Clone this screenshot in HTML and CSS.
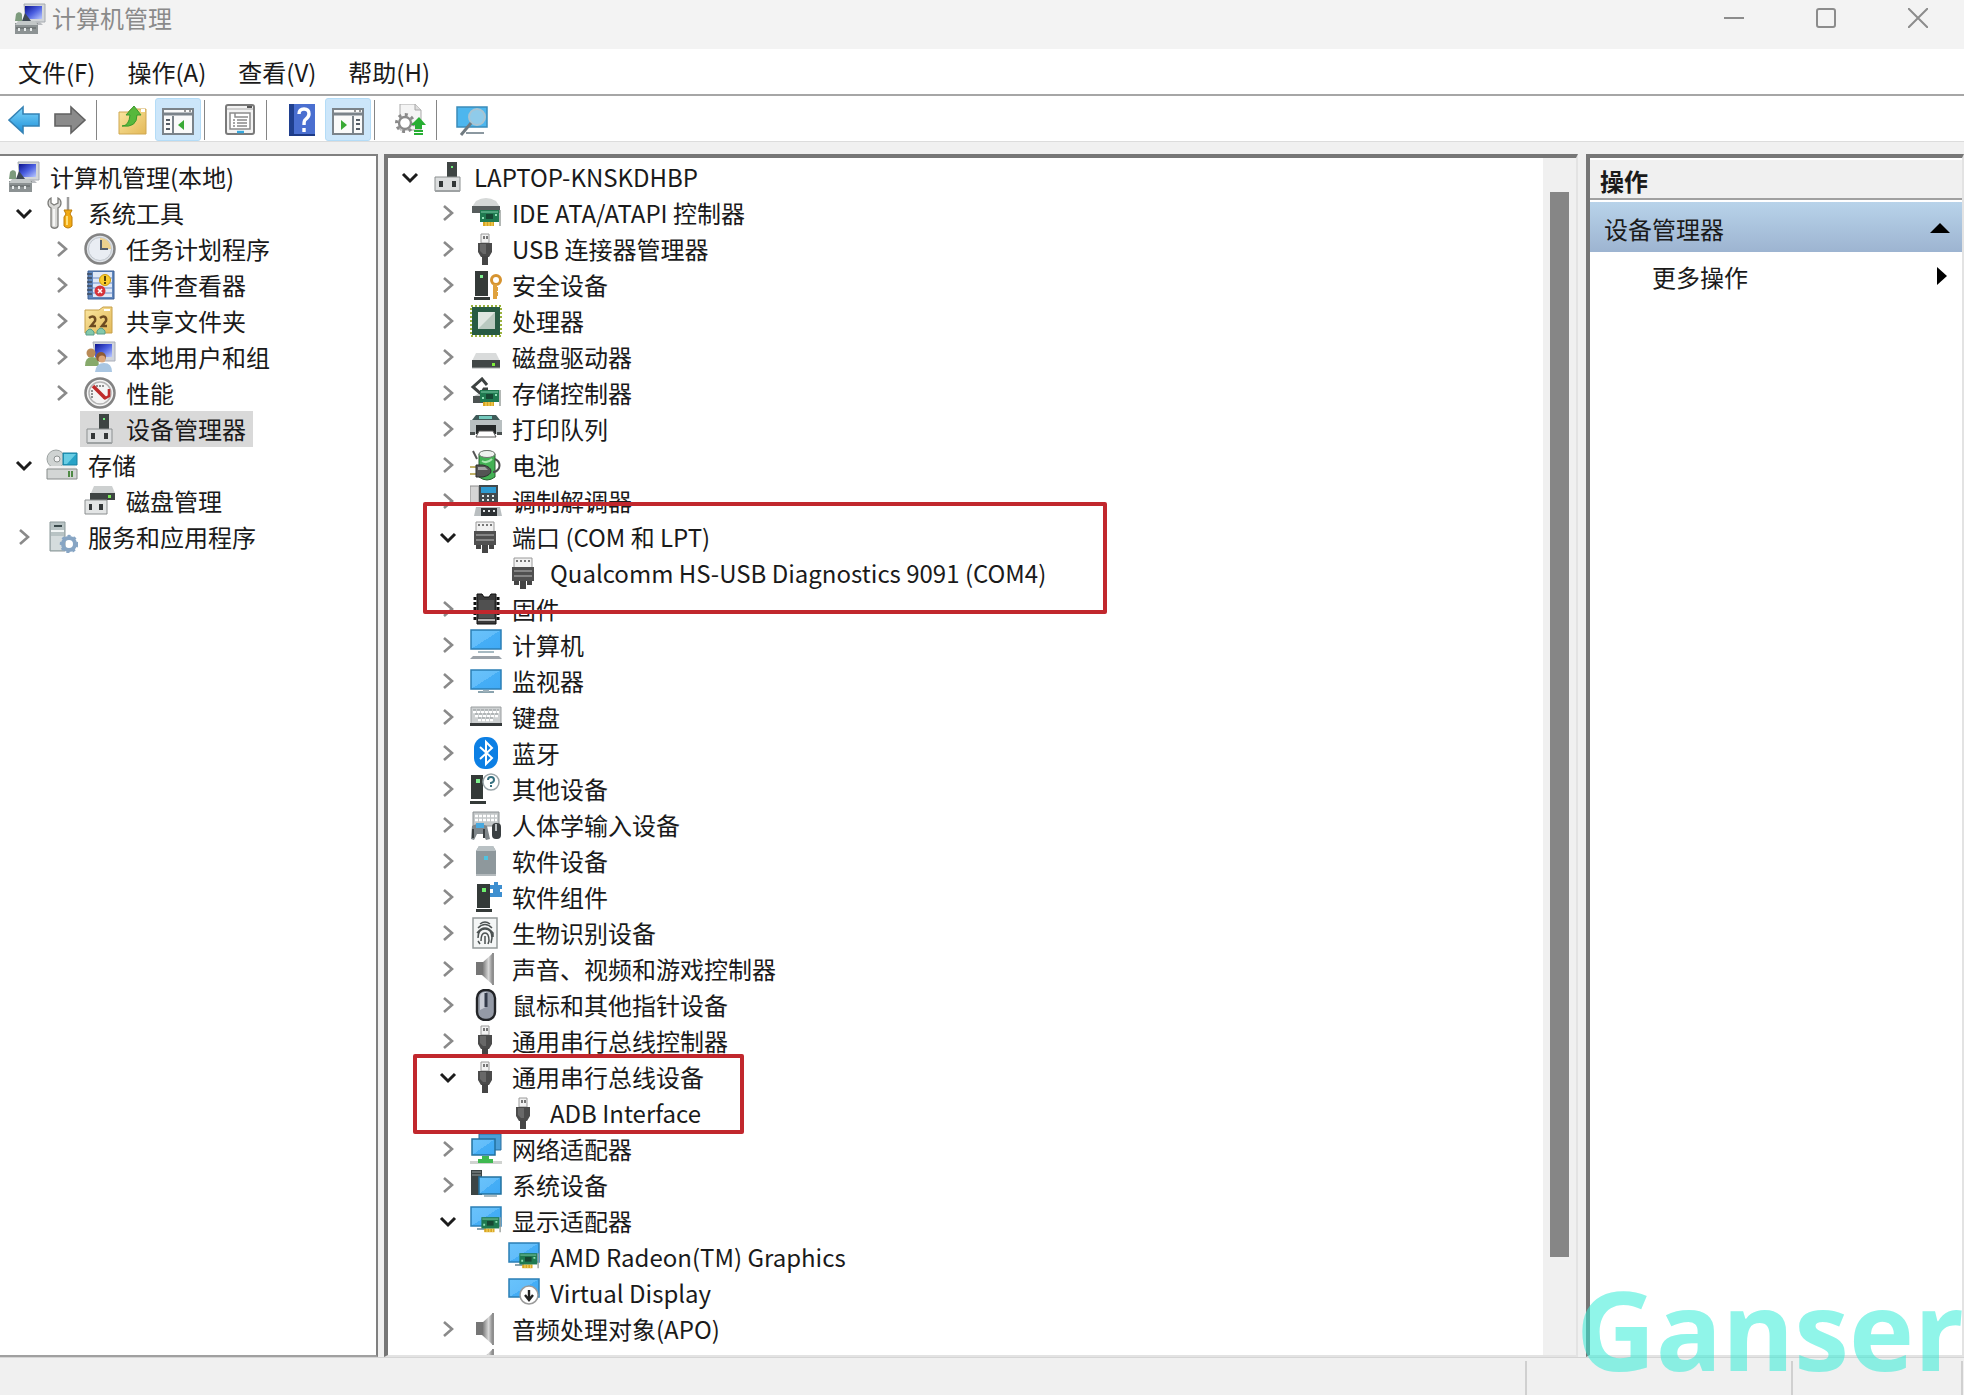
FILE: index.html
```html
<!DOCTYPE html>
<html lang="zh-CN">
<head>
    <meta charset="UTF-8">
    <meta name="viewport" content="width=device-width, initial-scale=1.0">
    <title>计算机管理</title>
    <link rel="stylesheet" href="styles.css">
</head>
<body>
    <!-- Icon sprite -->
    <svg class="sprite" aria-hidden="true">
        <defs>
            <linearGradient id="screen" x1="0" y1="0" x2="1" y2="1">
                <stop offset="0" stop-color="#69c3fb"/>
                <stop offset="0.5" stop-color="#62bdfa"/>
                <stop offset="0.5" stop-color="#45aef6"/>
                <stop offset="1" stop-color="#3fa9f5"/>
            </linearGradient>
            <linearGradient id="metal" x1="0" y1="0" x2="1" y2="0">
                <stop offset="0" stop-color="#6d6d6d"/>
                <stop offset="0.6" stop-color="#d8d8d8"/>
                <stop offset="1" stop-color="#7d7d7d"/>
            </linearGradient>
            <linearGradient id="navy" x1="0" y1="0" x2="1" y2="1">
                <stop offset="0" stop-color="#0b128e"/>
                <stop offset="0.5" stop-color="#4a5ee0"/>
                <stop offset="1" stop-color="#b9c8ff"/>
            </linearGradient>
            <linearGradient id="folder" x1="0" y1="0" x2="1" y2="1">
                <stop offset="0" stop-color="#fbe7a2"/>
                <stop offset="1" stop-color="#e3b958"/>
            </linearGradient>
            <linearGradient id="blue" x1="0" y1="0" x2="0" y2="1">
                <stop offset="0" stop-color="#7fd6fb"/>
                <stop offset="1" stop-color="#1c8fd8"/>
            </linearGradient>
        </defs>
        <symbol id="chevron-right" viewBox="0 0 32 32"><path d="M12 9l8 7-8 7" fill="none" stroke="#8a8a8a" stroke-width="2.6"/></symbol>
        <symbol id="chevron-down" viewBox="0 0 32 32"><path d="M9 13l7 7 7-7" fill="none" stroke="#1c1c1c" stroke-width="3"/></symbol>
        <symbol id="card" viewBox="0 0 32 32">
            <path d="M30 13v16" stroke="#9aa19d" stroke-width="1.5"/>
            <path d="M13 25h11v4H13z" fill="#d9a520"/><path d="M16 25v4M19 25v4M22 25v4" stroke="#f4da72"/>
            <path d="M10 13h19v12H10z" fill="#1f7a50"/><path d="M11 14h17v2H11z" fill="#4fa37c"/>
            <path d="M16 17h7v5h-7z" fill="#174733"/><path d="M12 20h2v2h-2zM25 17h2v2h-2z" fill="#8fe0b4"/>
        </symbol>
        <symbol id="computer" viewBox="0 0 32 32">
            <path d="M10 1h21v18H12z" fill="#d3d6d8" stroke="#a5aab0"/>
            <path d="M11 3h17v13H11z" fill="url(#navy)"/>
            <path d="M2 11c2-3 6-2 6 1v6H1z" fill="#7d9b7d"/>
            <path d="M11 10l6 8H8z" fill="#3f4954"/>
            <path d="M18 19h8l3 3H17z" fill="#b9bcc0"/>
            <path d="M1 20h23v11H1z" fill="#8c9293"/><path d="M1 22h23l-3-4H4z" fill="#c3c8c8"/>
            <path d="M2 25h20" stroke="#5a6060"/><path d="M5 25v3M11 25v3M17 25v3" stroke="#e8ecec" stroke-width="2"/>
        </symbol>
        <symbol id="tools" viewBox="0 0 32 32">
            <path d="M5 1v5l3 2 4-2V1c4 2 4 8 0 10v18c-1 3-6 3-7 0V11C1 9 1 3 5 1z" fill="#d9d9d7" stroke="#7e7e7b" stroke-width="1.3"/>
            <path d="M8 12v17" stroke="#fff" stroke-width="1.5"/>
            <path d="M22 0v14" stroke="#9c9c9c" stroke-width="2.5"/>
            <path d="M18 13h8l-2 4 2 3v9q-4 4-8 0v-9l2-3z" fill="#f1aa14" stroke="#bd7c08"/>
            <path d="M21 19v9" stroke="#ffe07a" stroke-width="2"/>
        </symbol>
        <symbol id="clock" viewBox="0 0 32 32">
            <circle cx="16" cy="16" r="14.5" fill="#dfe3e8" stroke="#838383" stroke-width="2.5"/>
            <circle cx="16" cy="16" r="11.5" fill="#e9edf3" stroke="#bfc5cc"/>
            <path d="M16 16V5a11 11 0 0 1 11 11z" fill="#ecd08e"/>
            <path d="M17 7v9h7" fill="none" stroke="#555e6c" stroke-width="2"/>
        </symbol>
        <symbol id="events" viewBox="0 0 32 32">
            <path d="M4 2h26v28H4z" fill="#5f86bd" stroke="#3d5f94"/>
            <path d="M9 3h19v25H9z" fill="#dfe8f6"/>
            <path d="M9 9h19M9 14h19M9 19h19M9 24h19" stroke="#6e8ecb"/>
            <path d="M3 5h5M3 9h5M3 13h5M3 17h5M3 21h5M3 25h5" stroke="#3f4b5c" stroke-width="1.6"/>
            <circle cx="21" cy="11" r="5.5" fill="#f9cc2e" stroke="#d29d0a"/><path d="M21 7v5M21 13v2" stroke="#52420a" stroke-width="2"/>
            <circle cx="16" cy="22" r="5.5" fill="#d6333a"/><path d="M14 20l4 4M18 20l-4 4" stroke="#fff" stroke-width="1.6"/>
        </symbol>
        <symbol id="share" viewBox="0 0 32 32">
            <path d="M1 5h14l4-3h9v26H1z" fill="url(#folder)" stroke="#c6a04b"/>
            <path d="M20 4h6v2h-6z" fill="#fff"/>
            <path d="M5 13c4-3 7-1 6 3l-4 5h5M16 13c4-3 7-1 6 3l-4 5h5" fill="none" stroke="#6e4b21" stroke-width="2.5"/>
            <path d="M2 27q4-6 8 0v3H2zM13 26q4-6 8 0v3h-8z" fill="#83c9ac" stroke="#5a9d8a"/>
        </symbol>
        <symbol id="users" viewBox="0 0 32 32">
            <path d="M9 1h22v19H12z" fill="#d0d4dc" stroke="#a9adb8"/><path d="M11 3h17v13H11z" fill="url(#navy)"/>
            <circle cx="7" cy="12" r="4.5" fill="#b98a56"/><path d="M1 25q0-9 7-9t7 9z" fill="#86a96b"/>
            <circle cx="17" cy="16" r="5" fill="#8e5a33"/><circle cx="18" cy="18" r="3.5" fill="#dba67a"/>
            <path d="M11 31q1-9 9-9t8 9z" fill="#a9c6e2"/>
        </symbol>
        <symbol id="perf" viewBox="0 0 32 32">
            <circle cx="16" cy="16" r="14.5" fill="#f4f4f4" stroke="#838383" stroke-width="2.5"/>
            <circle cx="16" cy="16" r="11" fill="none" stroke="#b4b4b4" stroke-width="1.5"/>
            <path d="M8 21v-8M12 9h8" stroke="#8f8f8f" stroke-width="2" stroke-dasharray="2 1"/>
            <path d="M9 9l12 12" stroke="#bf2b2b" stroke-width="3.5"/><path d="M25 12v7l-5 3" fill="none" stroke="#bf2b2b" stroke-width="2.6"/>
        </symbol>
        <symbol id="device" viewBox="0 0 32 32">
            <path d="M15 1h10v15H15z" fill="#3e4443"/><path d="M19 5h2v2h-2z" fill="#6ef07a"/>
            <path d="M3 16h25v14H3z" fill="#dcdedf" stroke="#8b8f90"/><path d="M3 29h25v2H3z" fill="#9ea2a3"/>
            <path d="M7 20h4v6H7zM20 20h4v6h-4z" fill="#333738"/>
        </symbol>
        <symbol id="storage" viewBox="0 0 32 32">
            <circle cx="10" cy="10" r="9" fill="#cfd3d2" stroke="#9da3a2"/><circle cx="11" cy="10" r="3" fill="#f5f5f5" stroke="#8c9190"/>
            <path d="M17 4h14v12H17z" fill="#27a3c7" stroke="#177f9e"/><path d="M18 5h12l-9 10h-3z" fill="#69cde4"/>
            <path d="M3 17h26l2 4H1z" fill="#f0f0f0"/><path d="M1 20h30v10H1z" fill="#d3d6d5" stroke="#868b8a"/>
            <path d="M23 22v6M26 22v6" stroke="#4f8a45" stroke-width="2"/>
        </symbol>
        <symbol id="disk-mgmt" viewBox="0 0 32 32">
            <path d="M10 1h18l3 7H7z" fill="#cdd0d0"/><path d="M6 8h25v7H6z" fill="#3e4443"/><path d="M24 10h3v3h-3z" fill="#78ea55"/>
            <path d="M1 15h22v14H1z" fill="#e3e5e5" stroke="#8b8f90"/><path d="M5 19h3v6H5zM15 19h4v6h-4z" fill="#333738"/>
        </symbol>
        <symbol id="services" viewBox="0 0 32 32">
            <path d="M4 1h15v29H4z" fill="#b8c3c4" stroke="#8b9899"/><path d="M8 5h8" stroke="#39484a" stroke-width="2"/><path d="M5 10h13" stroke="#f1f5f5" stroke-width="2"/>
            <path d="M5 15h13v14H5z" fill="#d5dcdd"/>
            <circle cx="23" cy="23" r="6" fill="none" stroke="#87a5c4" stroke-width="4"/>
            <circle cx="23" cy="23" r="8" fill="none" stroke="#87a5c4" stroke-width="2.5" stroke-dasharray="3 3"/>
        </symbol>
        <symbol id="ide" viewBox="0 0 32 32">
            <path d="M6 4q10-6 20 0l4 6H2z" fill="#d5d8d7"/><path d="M2 9h28v7H2z" fill="#575d5d"/><use href="#card" width="32" height="32"/>
        </symbol>
        <symbol id="usb" viewBox="0 0 32 32">
            <path d="M11 1h8v9h-8z" fill="#f2f2f2" stroke="#9a9a9a"/><path d="M13 3h2v3h-2zM16 3h2v3h-2z" fill="#777"/>
            <path d="M8 10h14v9l-3 5h-8l-3-5z" fill="#4b4b4b"/><path d="M10 11h6v10h-3l-3-3z" fill="#686868"/><path d="M12 23h6v9h-6z" fill="#454545"/>
        </symbol>
        <symbol id="tower" viewBox="0 0 32 32">
            <path d="M5 2h13v25H5z" fill="#343a38"/><path d="M10 6h3v3h-3z" fill="#7ef08e"/><path d="M4 28h16v3H4z" fill="#343a38"/>
        </symbol>
        <symbol id="security" viewBox="0 0 32 32">
            <use href="#tower" width="32" height="32"/>
            <circle cx="26" cy="11" r="4.5" fill="none" stroke="#d6932f" stroke-width="3"/><path d="M25 15v15M26 20h2M26 25h2" stroke="#e0a23e" stroke-width="4"/>
        </symbol>
        <symbol id="cpu" viewBox="0 0 32 32">
            <path d="M1 1h30v30H1z" fill="none" stroke="#9ab23e" stroke-width="2" stroke-dasharray="2 2"/>
            <path d="M2 2h28v28H2z" fill="#275a43"/><path d="M8 7h17v17H8z" fill="#dfe6e1"/><path d="M25 7v17H8z" fill="#b9c9c0"/>
        </symbol>
        <symbol id="disk" viewBox="0 0 32 32">
            <path d="M6 12h20l4 8H2z" fill="#d9dbdb"/><path d="M2 19h28v8H2z" fill="#414746"/><path d="M22 22h3v3h-3z" fill="#7fee3b"/><path d="M2 27h28" stroke="#a7abaa"/>
        </symbol>
        <symbol id="storage-ctl" viewBox="0 0 32 32">
            <path d="M17 8l-5-6-9 8 8 7 3-5h4" fill="none" stroke="#3d4241" stroke-width="3"/>
            <path d="M3 19h12v7H3z" fill="#4c5251"/><path d="M4 19l4-2 6 2z" fill="#c5c9c8"/><use href="#card" width="32" height="32"/>
        </symbol>
        <symbol id="printer" viewBox="0 0 32 32">
            <path d="M6 2h20l4 5H2z" fill="#3f5a58"/><path d="M9 3h13v3H9z" fill="#74c9bd"/><path d="M0 7h32v14H0z" fill="#b8bfc0"/>
            <path d="M6 12h20v9H6z" fill="#242828"/><path d="M9 18h14l3 6H6z" fill="#fff" stroke="#555"/><path d="M0 19h5v3H0zM27 19h5v3h-5z" fill="#4b5151"/>
        </symbol>
        <symbol id="battery" viewBox="0 0 32 32">
            <path d="M3 2l4 8" stroke="#555" stroke-width="2"/>
            <path d="M9 5q8-7 16 0v23q-8 6-16 0z" fill="#43b154" stroke="#28602f"/><ellipse cx="17" cy="5" rx="8" ry="3.5" fill="#eef2ee" stroke="#707570"/>
            <path d="M12 12q5 3 10-2" fill="none" stroke="#a7e6ae" stroke-width="2"/>
            <path d="M25 10q6 3 4 9-2 4-6 4" fill="none" stroke="#4d4d4d" stroke-width="2"/>
            <path d="M0 18h7M0 25h7" stroke="#c2b269" stroke-width="2"/><path d="M6 16h7q8 2 8 6t-8 6H6z" fill="#545454" stroke="#2f2f2f"/><path d="M8 18h7l3 3H8z" fill="#a2a2a2"/>
        </symbol>
        <symbol id="modem" viewBox="0 0 32 32">
            <path d="M0 1h9v18H0z" fill="#d5d5d5" stroke="#8c8c8c"/><path d="M9 0h19v20H9z" fill="#42494c"/><path d="M11 2h15v6H11z" fill="#2d9ad0"/>
            <path d="M12 11h13M12 15h13" stroke="#e1e8ea" stroke-width="2" stroke-dasharray="2 3"/>
            <path d="M6 22h24l2 9H4z" fill="#b9bec0"/><path d="M11 23h16v8H11z" fill="#2c3033"/><path d="M13 26h13" stroke="#dfe3e5" stroke-width="2" stroke-dasharray="2 3"/>
        </symbol>
        <symbol id="port" viewBox="0 0 32 32">
            <path d="M6 1h18v10H6z" fill="#f1f1f1" stroke="#9a9a9a"/><path d="M8 4h15" stroke="#777" stroke-width="2" stroke-dasharray="2 2"/>
            <path d="M4 10h22v14H4z" fill="#505050"/><path d="M6 14h18M6 19h18" stroke="#858585" stroke-width="2"/><path d="M6 24h5v4H6zM19 24h5v4h-5zM12 24h6v8h-6z" fill="#454545"/>
        </symbol>
        <symbol id="firmware" viewBox="0 0 32 32">
            <path d="M7 1h5l2 3h5l2-3h5v30H7z" fill="#3a3a3a" stroke="#111"/><path d="M5 4v25M28 4v25" stroke="#111" stroke-width="3" stroke-dasharray="3 2"/><path d="M9 7h15v18H9z" fill="#505050"/><path d="M8 27h17" stroke="#ddd" stroke-width="1.5"/>
        </symbol>
        <symbol id="pc" viewBox="0 0 32 32">
            <path d="M1 1h30v19H1z" fill="url(#screen)" stroke="#2b7fb5" stroke-width="1.5"/><path d="M8 23h16" stroke="#8aa3ae" stroke-width="1.5"/><path d="M3 27h26l3 3H0z" fill="#9ba2a9"/>
        </symbol>
        <symbol id="monitor" viewBox="0 0 32 32">
            <path d="M1 5h30v19H1z" fill="url(#screen)" stroke="#2b7fb5" stroke-width="1.5"/><path d="M8 27h16" stroke="#8aa3ae" stroke-width="2"/><path d="M13 25h6v2h-6z" fill="#9fb1ba"/>
        </symbol>
        <symbol id="keyboard" viewBox="0 0 32 32">
            <path d="M1 6h30v18H1z" fill="#cdd0d1" stroke="#9a9ea0"/><path d="M3 11h26M5 15h23M8 19h16" stroke="#fff" stroke-width="2.4" stroke-dasharray="3 1"/><path d="M3 9h26M5 13h23M8 17h16" stroke="#8f9597" stroke-dasharray="3 1"/><path d="M0 22h32v3H0z" fill="#35393a"/>
        </symbol>
        <symbol id="bluetooth" viewBox="0 0 32 32">
            <rect x="4" y="0" width="24" height="32" rx="11" fill="#0c7fe4"/><path d="M10 10l12 11-6 6V5l6 6-12 11" fill="none" stroke="#fff" stroke-width="2"/>
        </symbol>
        <symbol id="unknown" viewBox="0 0 32 32">
            <path d="M1 2h12v24H1zM0 28h16v3H0z" fill="#343a38"/><path d="M6 6h4v4H6z" fill="#7ef08e"/>
            <circle cx="21" cy="9" r="8" fill="#fff" stroke="#9aa5a9" stroke-width="1.5"/><path d="M18 7q0-3 3-3t3 3q0 2-3 3v1M21 12v2" fill="none" stroke="#35707f" stroke-width="2"/>
        </symbol>
        <symbol id="hid" viewBox="0 0 32 32">
            <path d="M3 3h26v14H3z" fill="#c3c7c8" stroke="#8d9294"/><path d="M5 7h22M5 11h22" stroke="#fff" stroke-width="2.4" stroke-dasharray="3 1"/>
            <path d="M1 30l1-13q6-4 15 0l3 13-4 1-3-6H7l-3 6z" fill="#7f868a"/><path d="M6 14h8v5H6z" fill="#49a9df"/><path d="M14 20v9M3 20v9" stroke="#3a3f41" stroke-width="2"/>
            <rect x="22" y="14" width="9" height="16" rx="4" fill="#3a3f41"/><path d="M26 15v7" stroke="#b5babc" stroke-width="2"/>
        </symbol>
        <symbol id="soft-device" viewBox="0 0 32 32">
            <path d="M9 1h14l3 5v25H6V6z" fill="#8e989c"/><path d="M9 1h14l3 5H6z" fill="#b9c1c4"/><path d="M14 11h4v4h-4z" fill="#4fc3e0"/><path d="M6 30h20" stroke="#b4babd" stroke-width="2"/>
        </symbol>
        <symbol id="soft-part" viewBox="0 0 32 32">
            <path d="M7 3h13v24H7zM6 28h16v3H6z" fill="#343a38"/><path d="M12 7h4v4h-4z" fill="#6df06c"/>
            <path d="M20 4h4V1h4v3h4v4h-2v3h2v5H20v-4h3V8h-3z" fill="#3e8fd0"/>
        </symbol>
        <symbol id="biometric" viewBox="0 0 32 32">
            <path d="M3 1h24v30H3z" fill="#f4f6f6" stroke="#939999" stroke-width="1.5"/>
            <path d="M10 7q5-4 10 0M8 11q7-7 14 0M7 16q8-10 16 0v4M8 21q0-9 7-9t7 9l-1 5M11 24q0-8 4-8t4 8l-1 3M15 19v8M8 24l2 3" fill="none" stroke="#4b5151" stroke-width="1.5"/>
        </symbol>
        <symbol id="speaker" viewBox="0 0 32 32">
            <path d="M6 9h8v13H6z" fill="#757575"/><path d="M12 10L23 0v32L12 22z" fill="url(#metal)"/><path d="M23 0v32" stroke="#8f8f8f" stroke-width="2"/>
        </symbol>
        <symbol id="mouse" viewBox="0 0 32 32">
            <rect x="7" y="1" width="18" height="30" rx="8" fill="#949aa6" stroke="#222427" stroke-width="2.4"/><path d="M10 8q0-5 6-5v15l-6 3z" fill="#c8ccd4"/><path d="M16 4v14" stroke="#333a48" stroke-width="3"/>
        </symbol>
        <symbol id="network" viewBox="0 0 32 32">
            <path d="M9 1h22v16H9z" fill="#4b9fd8" stroke="#2b6f9f"/><path d="M2 6h23v16H2z" fill="url(#screen)" stroke="#23719f" stroke-width="1.5"/>
            <path d="M0 28h32v3H0z" fill="#d0d3d0"/><path d="M12 23h7v3h4v4H8v-4h4z" fill="#3fb950"/>
        </symbol>
        <symbol id="system" viewBox="0 0 32 32">
            <path d="M1 1h11v25H1z" fill="#3c4444"/><path d="M2 3h9M2 6h9" stroke="#929a9a"/><path d="M9 8h22v17H9z" fill="url(#screen)" stroke="#23719f" stroke-width="1.5"/><path d="M14 27h13" stroke="#8aa3ae" stroke-width="1.5"/>
        </symbol>
        <symbol id="display" viewBox="0 0 32 32">
            <path d="M1 2h30v19H1z" fill="url(#screen)" stroke="#2b7fb5" stroke-width="1.5"/><path d="M7 24h9" stroke="#8aa3ae" stroke-width="2"/>
            <use href="#card" x="2" width="30" height="30"/>
        </symbol>
        <symbol id="virtual" viewBox="0 0 32 32">
            <path d="M1 2h30v18H1z" fill="url(#screen)" stroke="#2b7fb5" stroke-width="1.5"/>
            <circle cx="21" cy="18" r="9" fill="#fff" stroke="#9b9b9b" stroke-width="1.5"/><path d="M21 13v9M17 18l4 5 4-5" fill="none" stroke="#222" stroke-width="2.4"/>
        </symbol>
        <symbol id="back" viewBox="0 0 32 32"><path d="M1 16L15 3v7h16v12H15v7z" fill="url(#blue)" stroke="#3582b5" stroke-width="1.6"/></symbol>
        <symbol id="forward" viewBox="0 0 32 32"><path d="M31 16L17 3v7H1v12h16v7z" fill="#8b8b8b" stroke="#626262" stroke-width="1.6"/></symbol>
        <symbol id="up" viewBox="0 0 32 32">
            <path d="M3 8h9l3-3h15v25H3z" fill="url(#folder)" stroke="#cfa750"/><path d="M25 5h4v3h-4z" fill="#fff"/>
            <path d="M6 22q7 0 8-11h-4l8-9 7 9h-4q0 13-15 11z" fill="#57b83c" stroke="#3a9a2c"/>
        </symbol>
        <symbol id="tree-pane" viewBox="0 0 32 32">
            <path d="M1 5h30v25H1z" fill="#fafafa" stroke="#7b838a" stroke-width="2"/><path d="M1 10h30" stroke="#7b838a" stroke-width="3"/><path d="M22 7h2M27 7h2" stroke="#333"/>
            <path d="M11 12v18" stroke="#7b838a" stroke-width="2"/><path d="M4 16h4M4 20h4M4 25h4" stroke="#555d66" stroke-width="2"/><path d="M22 16v10l-6-5z" fill="#39a935"/>
        </symbol>
        <symbol id="action-pane" viewBox="0 0 32 32">
            <path d="M1 5h30v25H1z" fill="#fafafa" stroke="#7b838a" stroke-width="2"/><path d="M1 10h30" stroke="#7b838a" stroke-width="3"/><path d="M22 7h2M27 7h2" stroke="#333"/>
            <path d="M21 12v18" stroke="#7b838a" stroke-width="2"/><path d="M24 16h4M24 20h4M24 25h4" stroke="#555d66" stroke-width="2"/><path d="M9 16v10l6-5z" fill="#39a935"/>
        </symbol>
        <symbol id="props" viewBox="0 0 32 32">
            <rect x="2" y="1" width="28" height="29" rx="2" fill="#f3f3f3" stroke="#7a7a7a" stroke-width="2"/><path d="M3 5h26" stroke="#aaa"/><path d="M23 3h5" stroke="#555" stroke-width="2"/>
            <path d="M6 9h20v16H6z" fill="#fff" stroke="#8c8c8c" stroke-width="1.5"/><path d="M11 9v4h13" fill="none" stroke="#8c8c8c" stroke-width="1.5"/>
            <path d="M9 16h2M9 19h2M9 22h2M13 16h10M13 19h10M13 22h10" stroke="#888" stroke-width="1.5"/><path d="M13 28h7" stroke="#37a8de" stroke-width="2.4"/>
        </symbol>
        <symbol id="help" viewBox="0 0 32 32">
            <path d="M3 0h26v32H3z" fill="#4a6fd0"/><path d="M3 0h5v32H3z" fill="#20408f"/><path d="M3 31h26" stroke="#1d3a86" stroke-width="2"/>
            <path d="M13 10q0-5 5-5t5 5q0 3-4 6-1 1-1 5M18 24v4" fill="none" stroke="#fff" stroke-width="3.4"/>
        </symbol>
        <symbol id="scan" viewBox="0 0 32 32">
            <path d="M6 0h15l6 6v20H6z" fill="#f4f4f4" stroke="#a9a9a9"/><path d="M21 0v6h6" fill="#ddd" stroke="#a9a9a9"/>
            <circle cx="11" cy="19" r="6" fill="#fff" stroke="#8a8a8a" stroke-width="2.4"/><circle cx="11" cy="19" r="8.5" fill="none" stroke="#8a8a8a" stroke-width="3" stroke-dasharray="3 3.6"/>
            <path d="M25 13l7 8h-4v4h-7v-4h-4z" fill="#27ae33"/><path d="M20 27h9M20 30h9" stroke="#27ae33" stroke-width="2"/>
        </symbol>
        <symbol id="find-pc" viewBox="0 0 32 32">
            <path d="M1 3h30v20H1z" fill="#4db6ee" stroke="#3b8cb9" stroke-width="1.5"/><path d="M10 29h18" stroke="#8b98a0" stroke-width="2"/>
            <circle cx="21" cy="13" r="8" fill="#8fcbea" stroke="#a9c4d2" stroke-width="2"/><path d="M15 19L5 31" stroke="#707a80" stroke-width="3"/>
        </symbol>
    </svg>

    <header class="title-bar">
        <svg class="icon"><use href="#computer"/></svg>
        <h1>计算机管理</h1>
        <div class="window-buttons">
            <button aria-label="最小化"><svg viewBox="0 0 20 20"><path d="M0 10h20"/></svg></button>
            <button aria-label="最大化"><svg viewBox="0 0 20 20"><rect x="1" y="1" width="18" height="18" rx="2"/></svg></button>
            <button aria-label="关闭"><svg viewBox="0 0 20 20"><path d="M0 0l20 20M20 0L0 20"/></svg></button>
        </div>
    </header>

    <nav class="menu-bar">
        <button>文件(F)</button>
        <button>操作(A)</button>
        <button>查看(V)</button>
        <button>帮助(H)</button>
    </nav>

    <div class="toolbar">
        <button aria-label="后退"><svg class="icon"><use href="#back"/></svg></button>
        <button aria-label="前进"><svg class="icon"><use href="#forward"/></svg></button>
        <span class="separator"></span>
        <button aria-label="向上"><svg class="icon"><use href="#up"/></svg></button>
        <button class="pressed" aria-label="显示控制台树"><svg class="icon"><use href="#tree-pane"/></svg></button>
        <span class="separator"></span>
        <button aria-label="属性"><svg class="icon"><use href="#props"/></svg></button>
        <span class="separator"></span>
        <button aria-label="帮助"><svg class="icon"><use href="#help"/></svg></button>
        <button class="pressed" aria-label="显示操作窗格"><svg class="icon"><use href="#action-pane"/></svg></button>
        <span class="separator"></span>
        <button aria-label="扫描硬件改动"><svg class="icon"><use href="#scan"/></svg></button>
        <span class="separator"></span>
        <button aria-label="远程计算机"><svg class="icon"><use href="#find-pc"/></svg></button>
    </div>

    <main class="panes">
        <!-- Console tree -->
        <section class="pane console-pane">
            <ul class="tree">
                <li>
                    <div class="row"><span class="node"><svg class="icon"><use href="#computer"/></svg>计算机管理(本地)</span></div>
                    <ul>
                        <li>
                            <div class="row"><button class="toggle" aria-label="折叠"><svg class="icon"><use href="#chevron-down"/></svg></button><span class="node"><svg class="icon"><use href="#tools"/></svg>系统工具</span></div>
                            <ul>
                                <li class="row"><button class="toggle" aria-label="展开"><svg class="icon"><use href="#chevron-right"/></svg></button><span class="node"><svg class="icon"><use href="#clock"/></svg>任务计划程序</span></li>
                                <li class="row"><button class="toggle" aria-label="展开"><svg class="icon"><use href="#chevron-right"/></svg></button><span class="node"><svg class="icon"><use href="#events"/></svg>事件查看器</span></li>
                                <li class="row"><button class="toggle" aria-label="展开"><svg class="icon"><use href="#chevron-right"/></svg></button><span class="node"><svg class="icon"><use href="#share"/></svg>共享文件夹</span></li>
                                <li class="row"><button class="toggle" aria-label="展开"><svg class="icon"><use href="#chevron-right"/></svg></button><span class="node"><svg class="icon"><use href="#users"/></svg>本地用户和组</span></li>
                                <li class="row"><button class="toggle" aria-label="展开"><svg class="icon"><use href="#chevron-right"/></svg></button><span class="node"><svg class="icon"><use href="#perf"/></svg>性能</span></li>
                                <li class="row leaf"><span class="node selected"><svg class="icon"><use href="#device"/></svg>设备管理器</span></li>
                            </ul>
                        </li>
                        <li>
                            <div class="row"><button class="toggle" aria-label="折叠"><svg class="icon"><use href="#chevron-down"/></svg></button><span class="node"><svg class="icon"><use href="#storage"/></svg>存储</span></div>
                            <ul>
                                <li class="row leaf"><span class="node"><svg class="icon"><use href="#disk-mgmt"/></svg>磁盘管理</span></li>
                            </ul>
                        </li>
                        <li class="row"><button class="toggle" aria-label="展开"><svg class="icon"><use href="#chevron-right"/></svg></button><span class="node"><svg class="icon"><use href="#services"/></svg>服务和应用程序</span></li>
                    </ul>
                </li>
            </ul>
        </section>

        <!-- Device tree -->
        <section class="pane device-pane">
            <ul class="tree">
                <li>
                    <div class="row"><button class="toggle" aria-label="折叠"><svg class="icon"><use href="#chevron-down"/></svg></button><span class="node"><svg class="icon"><use href="#device"/></svg>LAPTOP-KNSKDHBP</span></div>
                    <ul>
                        <li class="row"><button class="toggle" aria-label="展开"><svg class="icon"><use href="#chevron-right"/></svg></button><span class="node"><svg class="icon"><use href="#ide"/></svg>IDE ATA/ATAPI 控制器</span></li>
                        <li class="row"><button class="toggle" aria-label="展开"><svg class="icon"><use href="#chevron-right"/></svg></button><span class="node"><svg class="icon"><use href="#usb"/></svg>USB 连接器管理器</span></li>
                        <li class="row"><button class="toggle" aria-label="展开"><svg class="icon"><use href="#chevron-right"/></svg></button><span class="node"><svg class="icon"><use href="#security"/></svg>安全设备</span></li>
                        <li class="row"><button class="toggle" aria-label="展开"><svg class="icon"><use href="#chevron-right"/></svg></button><span class="node"><svg class="icon"><use href="#cpu"/></svg>处理器</span></li>
                        <li class="row"><button class="toggle" aria-label="展开"><svg class="icon"><use href="#chevron-right"/></svg></button><span class="node"><svg class="icon"><use href="#disk"/></svg>磁盘驱动器</span></li>
                        <li class="row"><button class="toggle" aria-label="展开"><svg class="icon"><use href="#chevron-right"/></svg></button><span class="node"><svg class="icon"><use href="#storage-ctl"/></svg>存储控制器</span></li>
                        <li class="row"><button class="toggle" aria-label="展开"><svg class="icon"><use href="#chevron-right"/></svg></button><span class="node"><svg class="icon"><use href="#printer"/></svg>打印队列</span></li>
                        <li class="row"><button class="toggle" aria-label="展开"><svg class="icon"><use href="#chevron-right"/></svg></button><span class="node"><svg class="icon"><use href="#battery"/></svg>电池</span></li>
                        <li class="row"><button class="toggle" aria-label="展开"><svg class="icon"><use href="#chevron-right"/></svg></button><span class="node"><svg class="icon"><use href="#modem"/></svg>调制解调器</span></li>
                        <li class="marked">
                            <div class="row"><button class="toggle" aria-label="折叠"><svg class="icon"><use href="#chevron-down"/></svg></button><span class="node"><svg class="icon"><use href="#port"/></svg>端口 (COM 和 LPT)</span></div>
                            <ul>
                                <li class="row leaf"><span class="node"><svg class="icon"><use href="#port"/></svg>Qualcomm HS-USB Diagnostics 9091 (COM4)</span></li>
                            </ul>
                            <span class="mark mark-port"></span>
                        </li>
                        <li class="row"><button class="toggle" aria-label="展开"><svg class="icon"><use href="#chevron-right"/></svg></button><span class="node"><svg class="icon"><use href="#firmware"/></svg>固件</span></li>
                        <li class="row"><button class="toggle" aria-label="展开"><svg class="icon"><use href="#chevron-right"/></svg></button><span class="node"><svg class="icon"><use href="#pc"/></svg>计算机</span></li>
                        <li class="row"><button class="toggle" aria-label="展开"><svg class="icon"><use href="#chevron-right"/></svg></button><span class="node"><svg class="icon"><use href="#monitor"/></svg>监视器</span></li>
                        <li class="row"><button class="toggle" aria-label="展开"><svg class="icon"><use href="#chevron-right"/></svg></button><span class="node"><svg class="icon"><use href="#keyboard"/></svg>键盘</span></li>
                        <li class="row"><button class="toggle" aria-label="展开"><svg class="icon"><use href="#chevron-right"/></svg></button><span class="node"><svg class="icon"><use href="#bluetooth"/></svg>蓝牙</span></li>
                        <li class="row"><button class="toggle" aria-label="展开"><svg class="icon"><use href="#chevron-right"/></svg></button><span class="node"><svg class="icon"><use href="#unknown"/></svg>其他设备</span></li>
                        <li class="row"><button class="toggle" aria-label="展开"><svg class="icon"><use href="#chevron-right"/></svg></button><span class="node"><svg class="icon"><use href="#hid"/></svg>人体学输入设备</span></li>
                        <li class="row"><button class="toggle" aria-label="展开"><svg class="icon"><use href="#chevron-right"/></svg></button><span class="node"><svg class="icon"><use href="#soft-device"/></svg>软件设备</span></li>
                        <li class="row"><button class="toggle" aria-label="展开"><svg class="icon"><use href="#chevron-right"/></svg></button><span class="node"><svg class="icon"><use href="#soft-part"/></svg>软件组件</span></li>
                        <li class="row"><button class="toggle" aria-label="展开"><svg class="icon"><use href="#chevron-right"/></svg></button><span class="node"><svg class="icon"><use href="#biometric"/></svg>生物识别设备</span></li>
                        <li class="row"><button class="toggle" aria-label="展开"><svg class="icon"><use href="#chevron-right"/></svg></button><span class="node"><svg class="icon"><use href="#speaker"/></svg>声音、视频和游戏控制器</span></li>
                        <li class="row"><button class="toggle" aria-label="展开"><svg class="icon"><use href="#chevron-right"/></svg></button><span class="node"><svg class="icon"><use href="#mouse"/></svg>鼠标和其他指针设备</span></li>
                        <li class="row"><button class="toggle" aria-label="展开"><svg class="icon"><use href="#chevron-right"/></svg></button><span class="node"><svg class="icon"><use href="#usb"/></svg>通用串行总线控制器</span></li>
                        <li class="marked">
                            <div class="row"><button class="toggle" aria-label="折叠"><svg class="icon"><use href="#chevron-down"/></svg></button><span class="node"><svg class="icon"><use href="#usb"/></svg>通用串行总线设备</span></div>
                            <ul>
                                <li class="row leaf"><span class="node"><svg class="icon"><use href="#usb"/></svg>ADB Interface</span></li>
                            </ul>
                            <span class="mark mark-adb"></span>
                        </li>
                        <li class="row"><button class="toggle" aria-label="展开"><svg class="icon"><use href="#chevron-right"/></svg></button><span class="node"><svg class="icon"><use href="#network"/></svg>网络适配器</span></li>
                        <li class="row"><button class="toggle" aria-label="展开"><svg class="icon"><use href="#chevron-right"/></svg></button><span class="node"><svg class="icon"><use href="#system"/></svg>系统设备</span></li>
                        <li>
                            <div class="row"><button class="toggle" aria-label="折叠"><svg class="icon"><use href="#chevron-down"/></svg></button><span class="node"><svg class="icon"><use href="#display"/></svg>显示适配器</span></div>
                            <ul>
                                <li class="row leaf"><span class="node"><svg class="icon"><use href="#display"/></svg>AMD Radeon(TM) Graphics</span></li>
                                <li class="row leaf"><span class="node"><svg class="icon"><use href="#virtual"/></svg>Virtual Display</span></li>
                            </ul>
                        </li>
                        <li class="row"><button class="toggle" aria-label="展开"><svg class="icon"><use href="#chevron-right"/></svg></button><span class="node"><svg class="icon"><use href="#speaker"/></svg>音频处理对象(APO)</span></li>
                        <li class="row leaf"><span class="node"><svg class="icon"><use href="#speaker"/></svg></span></li>
                    </ul>
                </li>
            </ul>
            <div class="scrollbar"><div class="thumb"></div></div>
        </section>

        <!-- Actions -->
        <aside class="pane actions-pane">
            <h2>操作</h2>
            <button class="group">设备管理器<svg viewBox="0 0 20 20"><path d="M0 14L10 4l10 10z"/></svg></button>
            <button class="action">更多操作<svg viewBox="0 0 20 20"><path d="M5 0l10 9-10 9z"/></svg></button>
        </aside>
    </main>

    <footer class="status-bar">
        <span></span>
        <span></span>
        <span></span>
    </footer>

    <div class="watermark">Ganser</div>
</body>
</html>
```
FILE: styles.css
```css
* {
    box-sizing: border-box;
}
body {
    margin: 0;
    height: 100vh;
    display: flex;
    flex-direction: column;
    overflow: hidden;
    position: relative;
    background-color: #f0f0f0;
    color: #1a1a1a;
    font-family: "Noto Sans CJK SC", sans-serif;
    font-size: 24px;
    line-height: 36px;
}
button {
    border: none;
    padding: 0;
    background: none;
    color: inherit;
    font: inherit;
    cursor: pointer;
}
.sprite {
    position: absolute;
    width: 0;
    height: 0;
}
.icon {
    width: 32px;
    height: 32px;
    flex: none;
    display: block;
}

/* Title bar */
.title-bar {
    height: 49px;
    flex: none;
    display: flex;
    align-items: flex-start;
    padding: 3px 0 0 14px;
    background-color: #f3f3f3;
    color: #8a8a8a;
}
.title-bar h1 {
    margin: -3px 0 0 6px;
    font-size: 24px;
    font-weight: normal;
}
.window-buttons {
    display: flex;
    margin-left: auto;
}
.window-buttons button {
    width: 92px;
    height: 30px;
    display: flex;
    align-items: center;
    justify-content: center;
}
.window-buttons svg {
    width: 20px;
    height: 20px;
    fill: none;
    stroke: #8c8c8c;
    stroke-width: 2;
}

/* Menu and toolbar */
.menu-bar {
    height: 47px;
    flex: none;
    display: flex;
    align-items: center;
    gap: 32px;
    padding-left: 18px;
    background-color: #fff;
    border-bottom: 2px solid #a6a6a6;
}
.toolbar {
    height: 46px;
    flex: none;
    display: flex;
    align-items: center;
    padding: 2px 0 0 1px;
    background-color: #fff;
    border-bottom: 1px solid #dcdcdc;
}
.toolbar button {
    width: 46px;
    height: 43px;
    display: flex;
    align-items: center;
    justify-content: center;
    border: 1px solid transparent;
    border-radius: 3px;
}
.toolbar .pressed {
    background-color: #cce6fa;
    border-color: #b4dcf7;
}
.separator {
    width: 1px;
    height: 40px;
    margin: 0 12px 0 3px;
    background-color: #858585;
}

/* Panes */
.panes {
    flex: 1;
    min-height: 0;
    display: grid;
    grid-template-columns: 378px 1fr 378px;
    padding-top: 12px;
}
.pane {
    min-width: 0;
    overflow: hidden;
    background-color: #fff;
}
.console-pane {
    border-top: 2px solid #808080;
    border-right: 2px solid #808080;
    border-bottom: 2px solid #a0a0a0;
    padding: 3px 0 0 4px;
}
.device-pane {
    display: flex;
    margin: 0 8px 0 6px;
    padding-left: 6px;
    border-style: solid;
    border-width: 4px 2px 2px 4px;
    border-color: #767676 #e3e3e3 #e3e3e3 #767676;
}
.device-pane .tree {
    flex: 1;
    padding-top: 1px;
}
.tree,
.tree ul {
    margin: 0;
    padding: 0;
    list-style: none;
}
.device-pane .tree ul,
.console-pane .tree ul ul {
    padding-left: 38px;
}
.console-pane .tree > li > ul {
    padding-left: 4px;
}
.row {
    display: flex;
    height: 36px;
    white-space: nowrap;
}
.leaf {
    padding-left: 34px;
}
.toggle {
    width: 32px;
    margin-right: 2px;
    flex: none;
    display: flex;
    align-items: center;
}
.node {
    display: flex;
    align-items: center;
    gap: 10px;
    padding: 0 7px 0 4px;
}
.selected {
    background-color: #d9d9d9;
}
.scrollbar {
    width: 33px;
    flex: none;
    display: flex;
    padding: 34px 7px 98px;
    background-color: #f0f0f0;
}
.thumb {
    flex: 1;
    background-color: #868686;
}

/* Red frames drawn over the tree */
.marked {
    position: relative;
}
.mark {
    position: absolute;
    border: 4px solid #c1272d;
    border-radius: 2px;
    pointer-events: none;
}
.mark-port {
    top: -17px;
    bottom: -23px;
    left: -9px;
    width: 684px;
}
.mark-adb {
    top: -5px;
    bottom: -3px;
    left: -19px;
    width: 331px;
}

/* Actions */
.actions-pane {
    border-style: solid;
    border-width: 4px 2px 2px 4px;
    border-color: #767676 #e3e3e3 #e3e3e3 #767676;
}
.actions-pane h2 {
    margin: 2px 0;
    height: 40px;
    padding-left: 10px;
    background-color: #f0f0f0;
    border-bottom: 2px solid #a0a0a0;
    font-size: 24px;
    line-height: 42px;
}
.actions-pane button {
    width: 100%;
    display: flex;
    align-items: center;
    justify-content: space-between;
}
.actions-pane svg {
    width: 20px;
    height: 20px;
}
.actions-pane .group {
    height: 50px;
    padding: 4px 12px 0 14px;
    background: linear-gradient(#b8d3ea, #9db4d1);
}
.actions-pane .action {
    height: 48px;
    padding: 2px 10px 0 62px;
}

/* Status bar */
.status-bar {
    height: 38px;
    flex: none;
    display: flex;
    justify-content: flex-end;
    padding: 3px 1px 0 0;
    border-top: 1px solid #d5d5d5;
}
.status-bar span {
    border-right: 2px solid #d0d0d0;
}
.status-bar span:nth-child(2) {
    width: 266px;
}
.status-bar span:nth-child(3) {
    width: 170px;
}
.watermark {
    position: absolute;
    right: 0;
    bottom: 12px;
    color: #36edd8;
    opacity: 0.55;
    font-family: "Open Sans", sans-serif;
    font-size: 110px;
    font-weight: bold;
    line-height: 110px;
    pointer-events: none;
}
```
